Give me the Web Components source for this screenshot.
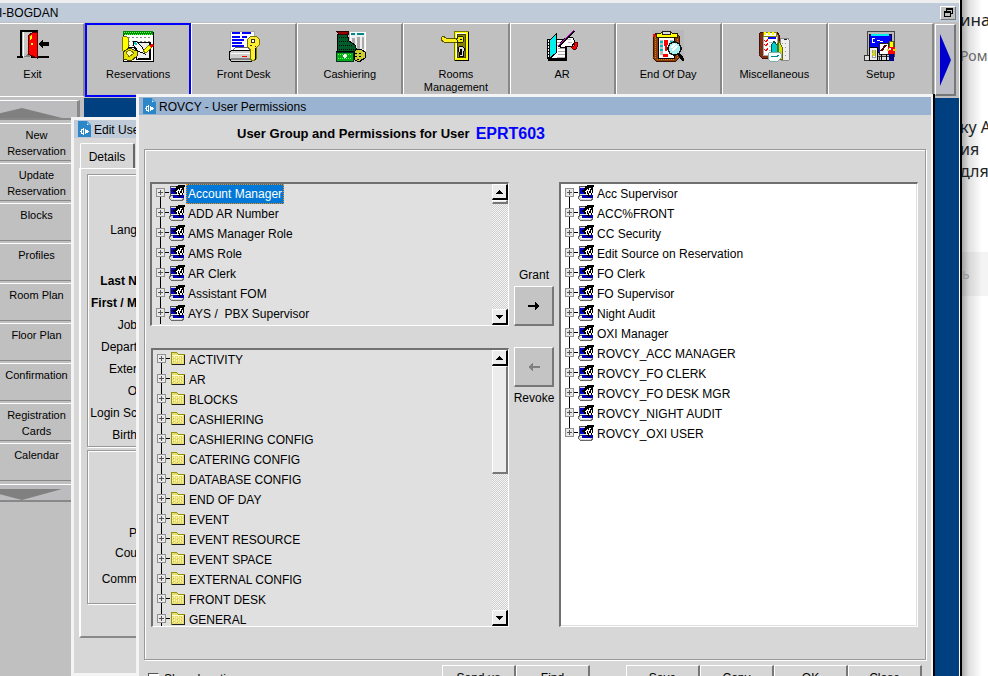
<!DOCTYPE html>
<html lang="en">
<head>
<meta charset="utf-8">
<title>User Permissions</title>
<style>
html,body{height:100%;margin:0}
body{font:12px/16px "Liberation Sans",Arial,sans-serif;color:#000;background:#fff;overflow:hidden}
</style>
</head>
<body>
<opera-app></opera-app>
<script>
const ICONS = {
exit:[32,32,`<path d="M0 27h6M4 28V1h17M20 1v27M14 27h18" fill="none" stroke="#000" stroke-width="1.5"/><path d="M6 3h13v2L6 27z" fill="#c8c8c8"/><path d="M6 2v25" stroke="#fff"/><path d="M6 27l7-4v4z" fill="#808080"/><path d="M11 6l4-3 5-1v26l-9-4z" fill="#f00" stroke="#500"/><path d="M13 6l2-1v3l-2 2zM14 13h2v2h-2z" fill="#ff0"/><path d="M21 14l5-5v3h6v4h-6v3z"/>`],
reservations:[32,32,`<path d="M1 2h30v29H1z" fill="#fff" stroke="#000"/><path d="M1 1h30v4H1z" fill="#080"/><path d="M2 2h28M3 4h28" stroke="#5f5" stroke-dasharray="1 1"/><path d="M2 7h28M2 11h28M2 15h28" stroke="#888" stroke-dasharray="2 2"/><path d="M14 12h14v17H14z" fill="#eee" stroke="#000"/><path d="M28 12v17M16 29h13" stroke="#000" stroke-width="2"/><path d="M11 12l3-1 6 6 3 7-7-3-5-6z" fill="#fff" stroke="#000"/><path d="M12 13l3 1" stroke="#0cc" stroke-width="2"/><path d="M21 21l6-6 3 2-6 6z" fill="#ff0" stroke="#770"/><path d="M27 16l3-3 2 3-3 2z" fill="#f00"/><path d="M1 7l3-1 2 2v10l-2 3H1L0 18V9z" fill="#ff0" stroke="#770"/><path d="M1 22l6-4 8 3v5l-6 5-8-2z" fill="#e8e000" stroke="#440"/><path d="M4 22l4-2 4 3-5 4z" fill="#ffa" stroke="#770"/><path d="M6 17c5 0 8 1 9 4" fill="none" stroke="#000"/>`],
frontdesk:[32,32,`<path d="M2 1h24v20H2z" fill="#fff" stroke="#aaa"/><path d="M4 3h8M14 3h9M4 7h8M14 7h5M4 10h12M4 13h10M4 16h12M14 19h5" stroke="#00f" stroke-width="1.5"/><path d="M5 20l3-3h11l4 4H4z" fill="#fff" stroke="#666"/><path d="M1 22l4-2h19l3 3v6l-3 2H3l-2-3z" fill="#d0d0d0" stroke="#000"/><path d="M3 23h22" stroke="#fff"/><path d="M3 29h22" stroke="#808080" stroke-width="2"/><path d="M14 26h5" stroke="#f00"/><path d="M20 9l3-3h5l3 3v6l-3 3v11l-3 2-3-2V19l-3-3z" fill="#ffef30" stroke="#770"/><path d="M23 9h3v3h-3zM22 15h2M27 16h1" stroke="#333" fill="#fff"/><path d="M27 18v12" stroke="#000"/>`],
cashiering:[32,32,`<path d="M16 2h15v18H16z" fill="#eee" stroke="#fff"/><path d="M17 4h4M23 4h7" stroke="#088" stroke-width="2"/><path d="M18 8h3v10h-3zM23 7h3v12h-3zM28 7h2v12h-2z" fill="#aaa"/><path d="M4 4h9l2 7 6 4 2 6H3z" fill="#005c28" stroke="#000"/><path d="M5 7h8M5 11h10M5 15h14M5 19h17" stroke="#000" stroke-dasharray="1 1"/><path d="M2 1h12v3H5z" fill="#900" stroke="#300"/><path d="M2 22h17v9H2z" fill="#08a818" stroke="#032"/><path d="M4 24h14M4 28h14" stroke="#5f5" stroke-dasharray="1 1"/><path d="M9 26h4M11 24v4" stroke="#fff" stroke-width="1.4"/><path d="M20 22l3-3 5 1 3 2v6l-6 4-4-2z" fill="#cc3" stroke="#000"/><path d="M21 23h8M21 26h8M23 29h5" stroke="#000" stroke-dasharray="2 2"/>`],
rooms:[32,32,`<path d="M14 1h14v29H14z" fill="#ff0" stroke="#770"/><path d="M16 3h9v24h-9z" fill="none" stroke="#fff"/><path d="M17 4h8v23h-8z" fill="#888000" stroke="#440"/><path d="M28 2v28H15" fill="none" stroke="#000"/><path d="M1 8l2-2 3 2h12v4H4L1 10z" fill="#ffef20" stroke="#550"/><circle cx="20.500" cy="9.500" r="3.500" fill="#ee0" stroke="#220"/><path d="M20 9h2v1h-2z"/><path d="M18 21v-3l2-2h2l2 2v3l-1 1v4h-4v-4z" fill="#ddd" stroke="#000"/><path d="M21 19v6" stroke="#000" stroke-width="2"/>`],
ar:[32,32,`<path d="M1 10l8-1h11v20H2z" fill="#fff" stroke="#000"/><path d="M11 12h9M11 15h9M12 18h8M12 21h8M12 24h8M11 27h9" stroke="#aaa"/><path d="M2 28h18v3H2z"/><path d="M20 13v18" stroke="#000" stroke-width="2"/><path d="M3 11l7-7v19l-7 6z" fill="#00f0f0" stroke="#000"/><path d="M1 12h2M1 15h2M1 18h2M1 21h2M1 24h2M1 27h2" stroke="#000"/><path d="M14 13l7-6 6 1 2 4-3 4-7 1-5 0z" fill="#fff" stroke="#000"/><path d="M21 9h4M22 12h4" stroke="#bbb"/><path d="M28 12h3l1 3-2 4h-3l-2-2 3-1z" fill="#f00" stroke="#600"/><path d="M12 17L28 1" stroke="#000" stroke-width="2.500"/><path d="M12 16L28 0" stroke="#c0c"/>`],
endofday:[32,32,`<path d="M0 0h32v32H0z" fill="#b8b8b8"/><path d="M2 5l3-2h19l3 3v22l-3 3H4l-3-3z" fill="#8b3d10" stroke="#410"/><path d="M3 7v21M25 7v21M5 29h18" stroke="#c80" stroke-dasharray="1 1"/><path d="M6 7h16v21H6z" fill="#fff" stroke="#000"/><path d="M8 10h3v15H8zM18 10h3v15h-3z" fill="#bbb"/><path d="M8 12h3M8 16h3M8 20h3M18 12h3" stroke="#0bb" stroke-width="2"/><path d="M4 3h5l2-2h7l2 2h5v4H4z" fill="#ff0" stroke="#220"/><path d="M10 1h8v3h-8z" fill="#ddd" stroke="#222"/><path d="M12 10h4l-1 11h-2zM11 24h5v3h-5z" fill="#f00"/><path d="M1 4h2v3H1z" fill="#f00"/><circle cx="22.500" cy="18.500" r="6.500" fill="#a8f0f0" stroke="#111" stroke-width="1.5"/><path d="M19 18l4-4M20 21l5-5" stroke="#fff" stroke-width="1.5"/><path d="M27 24l5 7" stroke="#000" stroke-width="3"/>`],
misc:[32,32,`<path d="M2 3l3-1h14l2 3v21l-3 2H4l-3-3z" fill="#7d2d12" stroke="#411"/><path d="M5 5h14v20H5z" fill="#fff" stroke="#aaa"/><path d="M5 2h13v4H5z" fill="#fff" stroke="#880"/><path d="M6 3h2M10 3h2M14 3h2" stroke="#ff0" stroke-width="3"/><path d="M10 8h8" stroke="#00f" stroke-width="1.5"/><path d="M6 10l2 2 2-3M6 14l2 2 2-3M6 19l2 2 2-3" fill="none" stroke="#f00"/><path d="M11 12h7M11 16h7M11 20h7" stroke="#bbb"/><path d="M22 9l2-1h6l1 2v20l-7 1-2-3z" fill="#eee" stroke="#888"/><path d="M24 13h6M24 17h6M24 21h6M24 25h6" stroke="#999" stroke-dasharray="1 2"/><path d="M26 9h3" stroke="#222"/><path d="M13 16l3-5 3 4v9h-6z" fill="#0cc" stroke="#055"/><path d="M19 16l2-5 3 6v12h-5z" fill="#dd0" stroke="#660"/><path d="M20 14v14" stroke="#088"/><path d="M11 23l3-1h8l1 2v4l-3 3h-8l-2-2z" fill="#f6ffff" stroke="#8aa"/><path d="M13 27l3-1 2 1 3-2" fill="none" stroke="#088"/>`],
setup:[32,32,`<path d="M3 1h27v25H3z" fill="#bbb" stroke="#444"/><path d="M5 4h22v18H5z" fill="#00f" stroke="#003"/><path d="M7 5h18" stroke="#0ee" stroke-width="2"/><path d="M11 8H8v4h3M13 10l3 1 3 1" fill="none" stroke="#fff"/><path d="M0 25h6v5H0zM15 26h10v4H15z" fill="#ddd" stroke="#333"/><path d="M5 19l2-2h6v13H5z" fill="#eee" stroke="#000"/><path d="M8 20h3v7H8z" fill="#fff" stroke="#999"/><path d="M10 20v6M8 24h2" stroke="#dd0" stroke-width="1.5"/><path d="M15 13h9v11h-9z" fill="#fff" stroke="#222"/><path d="M17 21l5-6" stroke="#500" stroke-width="2"/><path d="M17 24v6M22 24v6M14 30h11" stroke="#000"/><path d="M25 14l1-3h3l1 3-1 3h-3z" fill="#ff0" stroke="#660"/><path d="M24 17h7v7h-7z" fill="#f00"/><path d="M25 18h2v2h-2z" fill="#fff"/><path d="M25 24h5v7h-5z" fill="#008"/><path d="M23 20h2M29 20h3" stroke="#dd0" stroke-width="2"/>`],
role:[16,16,`<path d="M2 1h6v9H1V2z" fill="#e4e4e4" stroke="#555"/><path d="M2 3h4v6H2z" fill="#00c"/><path d="M1 12h14v1l-2 3H2l-2-2z" fill="#d8d8d8"/><path d="M0 11h2v1H1v2h1v1h11v-1h1v-2h1v2l-2 2H2l-2-2z" fill="#666"/><path d="M4 10h11v3H4z" fill="#00b"/><path d="M7 1h2V0h7v2h-1v6h-1v2h-2v2h-2v-1H8V9H6V7H4V5h2V3h1z"/><path d="M8 5h1V4h1v2H9v3h1v1H8V7H7V6h1zM11 3h2v1h-1v2h-1v2h-1V5h1zM13 5h1v3h-1v2h-2V8h2z" fill="#fff"/><path d="M3 13h9v1H3z" fill="#fff"/>`],
folder:[16,14,`<path d="M1 13V2l1-1h4l2 2h6v10z" fill="#e6de73" stroke="#96900a"/><path d="M2 4h11" stroke="#ffffc8"/><path d="M2 6v6M4 5v7M6 6v6M8 5v7M10 6v6M12 5v7" stroke="#fff3a8" stroke-dasharray="2 1"/><path d="M3 7v4M7 8v4M11 6v4" stroke="#cfc050" stroke-dasharray="1 2"/><path d="M14 4h1v10H2v-1h12z" fill="#222"/>`],
doc:[13,16,`<path d="M0 0h9l4 4v12H0z" fill="#2b87c8"/><path d="M9 0v4h4z" fill="#eef6fc"/><path d="M9 0l4 4h-3l-1-1z" fill="#63a9dd"/><path d="M5 7h1v7H5v-1H3v-2H2v-1h1V8h2zM7 8h1v1h2v1h1v1h-1v1H8v1H7z" fill="#fff"/><path d="M4 9h1v3H4z" fill="#2b87c8"/>`],
right:[12,10,`<path d="M0 4h7V1l5 4-5 4V6H0z"/>`],
left:[12,10,`<path d="M12 4H5V1L0 5l5 4V6h7z" fill="#808080"/>`],
up:[7,4,`<path d="M0 4l3.500-4L7 4z"/>`],
down:[7,4,`<path d="M0 0h7L3.500 4z"/>`],
restore:[9,9,`<path d="M2 0h7v6H7V5h1V2H3v1H2z"/><path fill-rule="evenodd" d="M0 3h7v6H0zM1 5v3h5V5z"/>`]
};
class Base extends HTMLElement{
  constructor(){super();this.attachShadow({mode:'open'})}
  connectedCallback(){
    const t=document.createElement('template');
    t.innerHTML=`<style>*{box-sizing:border-box}button{font:inherit;color:inherit;margin:0;border-radius:0}${this.css()}</style>${this.html()}`;
    this.shadowRoot.replaceChildren(t.content.cloneNode(true));
  }
  a(n){return this.getAttribute(n)||''}
}
const def=(n,css,html)=>customElements.define(n,class extends Base{css(){return css}html(){return html.call(this,this)}});

def('op-icon',`:host{display:block;flex:none}svg{display:block}`,e=>{
  const [w,h,p]=ICONS[e.a('name')];
  return `<svg width="${w}" height="${h}" viewBox="0 0 ${w} ${h}" shape-rendering="crispEdges" aria-hidden="true">${p}</svg>`});

def('tool-button',`
:host{display:block}
button{width:100%;height:100%;padding:6px 4px 0;border:solid;border-width:1px 2px 1px 1px;border-color:#fff #888 #fff #fff;background:#c0c0c0;display:flex;flex-direction:column;align-items:center;gap:6px;font-size:11px;line-height:13px}
span{max-width:72px}
:host([first]) button{padding-right:22px;border-left:0}
:host([active]) button{border:2px solid #00f;padding:5px 3px 0}`,
e=>`<button><op-icon name="${e.a('icon')}"></op-icon><span><slot></slot></span></button>`);

def('nav-button',`
:host{display:block}
button{width:100%;height:38px;padding:3px 11px 2px 0;border:solid;border-width:1px 0;border-color:#fff #888 #888 #fff;background:#c0c0c0;font-size:11px;line-height:16px;text-align:center;display:flex;justify-content:center}
span{width:72px}`,
e=>`<button><span><slot></slot></span></button>`);

def('nav-scroll',`
:host{display:block}
button{width:80px;height:20px;padding:0;background:#bcbcbf;border:solid;border-width:1px 3px 2px 0;border-color:#fff #888 #888;display:block}
:host([dir=down]) button{height:18px}
svg{display:block}`,
e=>e.a('dir')=='down'
?`<button aria-label="Scroll down"><svg width="64" height="15" viewBox="0 0 64 15"><path d="M-20 4H62L22 15z" fill="#808080"/></svg></button>`
:`<button aria-label="Scroll up"><svg width="64" height="16" viewBox="0 0 64 16"><path d="M-20 16L22 6l40 10z" fill="#808080"/></svg></button>`);

def('title-bar',`
:host{display:flex;align-items:center;gap:3px;height:18px;padding:0 4px;background:#bfcbd9;line-height:16px;white-space:nowrap}
:host([current]){background:#9ab3d1}
span{padding-top:2px}`,
()=>`<op-icon name="doc"></op-icon><span><slot></slot></span>`);

def('scroll-strip',`
:host{display:flex;flex-direction:column;flex:none;width:16px;background:repeating-conic-gradient(#cfcfcf 0 25%,#f4f4f4 0 50%) 0 0/2px 2px}
button{flex:none;width:16px;height:16px;padding:0;border:solid;border-width:1px 2px 2px 1px;border-color:#fff #000 #000 #fff;background:#ececec;display:grid;place-items:center}
i{flex:0 0 var(--thumb,4px);width:16px;background:#ececec;border:solid;border-width:1px 2px 2px 1px;border-color:#fff #777 #777 #fff}
b{flex:1}`,
()=>`<button aria-label="Scroll up"><op-icon name="up"></op-icon></button><i></i><b></b><button aria-label="Scroll down"><op-icon name="down"></op-icon></button>`);

def('tree-item',`
:host{display:flex;align-items:flex-start;height:20px;position:relative;white-space:pre}
:host::before{content:"";position:absolute;left:4px;top:0;bottom:0;width:1px;background:#000}
:host(:first-child)::before{top:8px}
:host([last])::before{bottom:12px}
button{position:relative;width:9px;height:9px;padding:0;border:1px solid #909090;background:linear-gradient(#555,#555) 1px 3px/5px 1px no-repeat,linear-gradient(#555,#555) 3px 1px/1px 5px no-repeat,#e8e8e8;margin-top:4px}
i{width:4px;height:1px;background:#000;margin-top:8px}
op-icon{margin-top:1px}
span{line-height:18px;padding:0 1px;margin-left:1px;border:1px solid transparent;height:20px}
:host([selected]) span{background:#0078d7;color:#fff;border:1px dotted #f80}`,
e=>`<button aria-label="Expand"></button><i></i><op-icon name="${e.a('icon')||'role'}"></op-icon><span><slot></slot></span>`);

def('tree-list',`
:host{display:flex;min-height:0;overflow:hidden;background:#e0e0e0;border:solid;border-width:2px 1px 1px 2px;border-color:#707070 #fff #fff #707070}
:host([white]){background:#fff;box-shadow:inset -1px -1px #e0e0e0}
div{flex:1;min-width:0;height:100%;overflow:hidden;padding-left:4px}`,
e=>`<div role="tree"><slot></slot></div>${e.hasAttribute('scroll')?'<scroll-strip></scroll-strip>':''}`);

def('push-button',`
:host{display:block}
button{width:100%;height:100%;padding:0;display:grid;place-items:center;background:#d6d6d6;border:solid;border-width:1px 2px 2px 1px;border-color:#fff #777 #777 #fff}
:host([dark]) button{background:#c4c4c4}`,
e=>`<button aria-label="${e.a('label')}"${e.hasAttribute('off')?' disabled':''}><slot></slot></button>`);

def('group-box',`
:host{display:block;border:1px solid #999;box-shadow:inset 1px 1px #fff,1px 1px #fff}`,()=>`<slot></slot>`);

const tree=(items,icon,sel)=>items.map((t,i)=>`<tree-item icon="${icon}"${i==sel?' selected':''}${icon=='role'&&i==items.length-1&&items.length>8?' last':''}>${t}</tree-item>`).join('');

def('permissions-window',`
:host{display:flex;flex-direction:column;background:#d7d7d7;border:solid;border-width:3px 2px 3px 3px;border-color:#f4f4f4;box-shadow:1px 0 #000,2px 0 #000}
h1{margin:0;display:flex;align-items:center;gap:6px;height:34px;padding:3px 0 0 98px;font-size:13px;line-height:16px;white-space:nowrap}
h1 output{font-size:16px;color:#00f}
group-box{flex:1;min-height:0;display:grid;grid-template-columns:1fr 40px 1fr;column-gap:5px;padding:32px 7px 32px 5px;margin:0 5px}
.left{display:flex;flex-direction:column;gap:22px;min-height:0}
.left tree-list:first-child{height:144px}
.left tree-list:last-child{flex:1;margin-left:1px;--thumb:108px}
.mid{display:flex;flex-direction:column;align-items:center;padding:85px 0 0;gap:3px;white-space:nowrap}
.mid span{line-height:16px}
.mid push-button{width:40px;height:40px;flex:none}
.mid push-button+push-button{margin-top:18px}
footer{display:flex;padding:5px 9px 0 9px;height:32px;flex:none}
label{display:flex;align-items:center;gap:5px;margin-right:auto}
input{appearance:none;width:11px;height:11px;margin:0;background:#fff;border:1px solid;border-color:#555 #fff #fff #555}
footer push-button{width:74px;height:27px}
.gap{margin-right:36px}`,
()=>`<title-bar current>ROVCY - User Permissions</title-bar>
<h1>User Group and Permissions for User <output>EPRT603</output></h1>
<group-box>
<div class="left"><tree-list scroll>${tree(['Account Manager','ADD AR Number','AMS Manager Role','AMS Role','AR Clerk','Assistant FOM','AYS /  PBX Supervisor'],'role',0)}</tree-list>
<tree-list scroll>${tree(['ACTIVITY','AR','BLOCKS','CASHIERING','CASHIERING CONFIG','CATERING CONFIG','DATABASE CONFIG','END OF DAY','EVENT','EVENT RESOURCE','EVENT SPACE','EXTERNAL CONFIG','FRONT DESK','GENERAL'],'folder',-1)}</tree-list></div>
<div class="mid"><span>Grant</span><push-button dark label="Grant"><op-icon name="right"></op-icon></push-button><push-button dark off label="Revoke"><op-icon name="left"></op-icon></push-button><span>Revoke</span></div>
<tree-list white>${tree(['Acc Supervisor','ACC%FRONT','CC Security','Edit Source on Reservation','FO Clerk','FO Supervisor','Night Audit','OXI Manager','ROVCY_ACC MANAGER','ROVCY_FO CLERK','ROVCY_FO DESK MGR','ROVCY_NIGHT AUDIT','ROVCY_OXI USER'],'role',-1)}</tree-list>
</group-box>
<footer><label><input type="checkbox">Show Inactive</label>
<push-button label="Send us">Send us</push-button><push-button class="gap" label="Find">Find</push-button><push-button label="Save">Save</push-button><push-button label="Copy">Copy</push-button><push-button label="OK">OK</push-button><push-button label="Close">Close</push-button></footer>`);

def('edit-window',`
:host{display:flex;flex-direction:column;background:#d7d7d7;border:3px solid #f4f4f4}
title-bar{flex:none}
.tab{align-self:flex-start;margin:5px 0 0 6px;height:25px;width:55px;padding:2px 0 0;background:#d7d7d7;border:solid;border-width:1px 2px 0 1px;border-color:#fff #666 #fff #fff;border-radius:2px 2px 0 0}
.page{margin:0 0 0 5px;padding:5px 0 32px 6px;border:solid;border-width:1px 0 2px 2px;border-color:#fff #fff #888 #fff;display:flex;flex-direction:column;gap:3px}
group-box{padding:44px 0 0;height:273px;width:200px}
group-box+group-box{height:154px;padding-top:72px}
p{margin:0;width:49px;line-height:22px;text-align:right;white-space:nowrap}
.sp{margin-bottom:29px}
.c{line-height:20px}.n{margin-top:6px}
b{font-weight:700}`,
()=>`<title-bar>Edit Use</title-bar><button class="tab">Details</button>
<div class="page"><group-box><p class="sp">Lang</p><p><b>Last N</b></p><p><b>First / M</b></p>${['Job','Depart','Exter','O','Login Sc','Birth'].map(t=>`<p>${t}</p>`).join('')}</group-box>
<group-box><p class="c">P</p><p class="c">Cou</p><p class="c n">Comm</p></group-box></div>`);

def('article-edge',`
:host{display:block;overflow:hidden;background:linear-gradient(90deg,#aaa,#e0e0e0 7px,#fff 20px);font-family:"Noto Sans",sans-serif;color:#333;white-space:nowrap}
p{margin:0 0 0 -2px}
.t{font-size:17px;line-height:24px;padding-top:8px;color:#222}
.s{font-size:14px;line-height:20px;padding-top:14px;color:#666}
.m{font-size:16px;line-height:22px;padding-top:50px;color:#222}
div{margin-top:70px;height:44px;background:#0000000b;font-size:14px;line-height:44px;color:#999}`,
()=>`<p class="t">ина</p><p class="s">Рома</p><p class="m">ку А<br>ия<br>для</p><div>ь</div>`);

def('opera-app',`
:host{display:grid;grid-template-columns:minmax(0,1fr) 26px;height:100vh;overflow:hidden}
main{position:relative;overflow:hidden;display:flex;flex-direction:column;background:#003f80;border-right:2px solid #000;box-shadow:inset -1px 0 #fff}
header{flex:none;display:flex;align-items:center;justify-content:space-between;height:23px;padding:0 3px 0 0;border-top:3px solid #eee;border-bottom:1px solid #c0c0c0;background:#bfcbd9;margin-right:1px}
header span{margin-left:-1px}
header button{width:16px;height:14px;padding:0;background:#c0c0c0;border:1px solid;border-color:#fff #777 #777 #fff;display:grid;place-items:center}
nav.tools{flex:none;display:grid;grid-template-columns:85px repeat(8,minmax(0,1fr)) 25px;height:75px;padding-bottom:2px;background:#c0c0c0;margin-right:1px}
.next{width:21px;height:72px;margin:1px;padding:0;border:solid;border-width:1px 2px 2px 1px;border-color:#fff #777 #777 #fff;background:#bcbcc4;display:grid;place-items:center}
nav.side{flex:1;width:84px;background:#c0c0c0;display:flex;flex-direction:column;gap:2px;padding-top:2px}
nav-scroll{margin-bottom:1px}
nav-scroll[dir=down]{margin:1px 0 0}
edit-window{position:absolute;left:71px;top:117px;width:400px;bottom:0}
permissions-window{position:absolute;left:136px;top:94px;right:27px;bottom:-19px}`,
()=>`<main><header><span>I-BOGDAN</span><button aria-label="Restore"><op-icon name="restore"></op-icon></button></header>
<nav class="tools"><tool-button icon="exit" first>Exit</tool-button><tool-button icon="reservations" active>Reservations</tool-button><tool-button icon="frontdesk">Front Desk</tool-button><tool-button icon="cashiering">Cashiering</tool-button><tool-button icon="rooms">Rooms Management</tool-button><tool-button icon="ar">AR</tool-button><tool-button icon="endofday">End Of Day</tool-button><tool-button icon="misc">Miscellaneous</tool-button><tool-button icon="setup">Setup</tool-button><button class="next" aria-label="More"><svg width="11" height="52" viewBox="0 0 11 52"><path d="M0 0l11 26L0 52z" fill="#00c"/></svg></button></nav>
<nav class="side"><nav-scroll dir="up"></nav-scroll>${['New Reservation','Update Reservation','Blocks','Profiles','Room Plan','Floor Plan','Confirmation','Registration Cards','Calendar'].map(t=>`<nav-button>${t.replace(' R','<br>R').replace(' Cards','<br>Cards')}</nav-button>`).join('')}<nav-scroll dir="down"></nav-scroll></nav>
<edit-window></edit-window><permissions-window></permissions-window></main>
<article-edge></article-edge>`);
</script>
</body>
</html>
